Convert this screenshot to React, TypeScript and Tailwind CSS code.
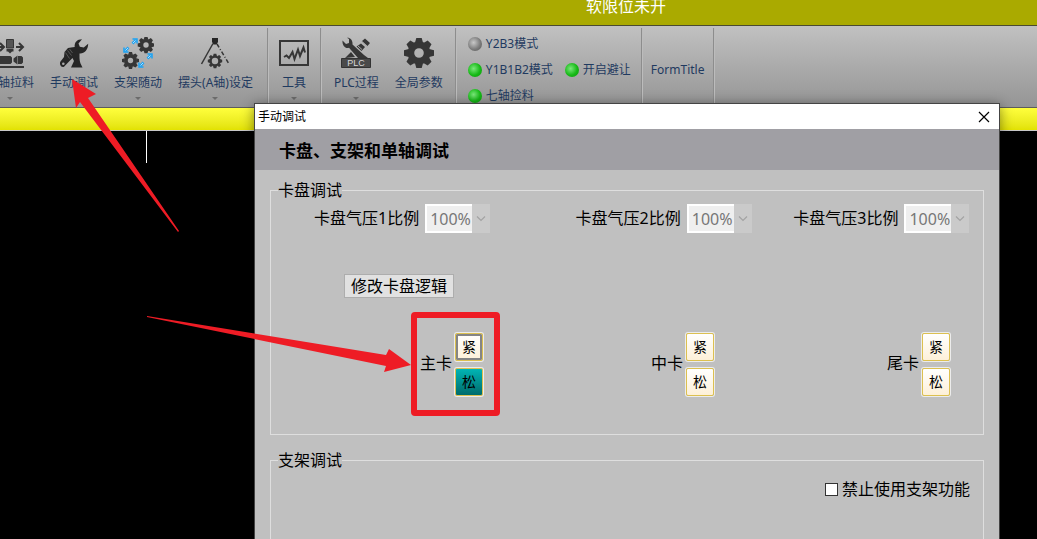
import type { ReactNode } from 'react';

const Gear = ({ cx, cy, r, hole, teeth = 8 }: { cx: number; cy: number; r: number; hole: number; teeth?: number }) => {
  const body = r * 0.76;
  const angles = Array.from({ length: teeth }, (_, i) => (i * 360) / teeth);
  return (
    <g transform={`translate(${cx} ${cy})`}>
      <circle r={(body + hole) / 2} fill="none" stroke="currentColor" strokeWidth={body - hole} />
      {angles.map((a) => (
        <path
          key={a}
          transform={`rotate(${a})`}
          fill="currentColor"
          d={`M${-r * 0.27} ${-body * 0.9} L${-r * 0.18} ${-r} H${r * 0.18} L${r * 0.27} ${-body * 0.9}Z`}
        />
      ))}
    </g>
  );
};

const Icon = ({ children }: { children: ReactNode }) => (
  <svg className="w-8 h-8 shrink-0 text-[#363636]" viewBox="0 0 32 32" fill="none" aria-hidden="true">
    {children}
  </svg>
);

const FeedIcon = () => (
  <Icon>
    <path d="M12.5 2.5h7v8.5h-7z" fill="#555" stroke="currentColor" />
    <path d="M12.5 12h7v2.5h-1.5l-2 2-2-2h-1.5z" fill="currentColor" />
    <path d="M22 10h6M25 6l4 4-4 4M3 10h6M6 6l4 4-4 4" stroke="currentColor" strokeWidth="2" />
    <path d="M5 19h11.500l1.500 1.500v5l-1.500 1.500H5zM19.500 21.500l4-3v9l-4-3zM24 19h3.500l1.500 1.500v5L27.500 27H24z" fill="currentColor" />
    <path d="M0 30h30" stroke="currentColor" strokeWidth="2" />
  </Icon>
);

const HandWrenchIcon = () => (
  <Icon>
    <path
      d="M24 2.200C19 2.200 16.200 5.500 16.700 10L13 10.500 10 11 6.500 15 6 20 2.500 24.500C1 27 3 31 6 29.800L11.500 24 14.500 21 16 24 13 30.500H24.500C23 27.500 21.500 25 21.500 21V16.500C26 17 30 13.500 30.200 6.800L25.800 10.500 21.800 9.800 20.500 6.500Z"
      fill="#262626"
    />
    <path d="M7.500 15.500l4 6M9.500 13.500l4 5M11.500 12l3 4" stroke="#777" strokeWidth=".6" />
    <circle cx="5.300" cy="26.800" r="1.300" fill="#aaa" />
  </Icon>
);

const FollowIcon = () => (
  <Icon>
    <Gear cx={24} cy={8} r={8.3} hole={2.7} />
    <Gear cx={8.5} cy={23.5} r={8.5} hole={2.7} />
    <g stroke="#1aa3f5" strokeWidth="2.500">
      <path d="M3 14l3.500-3.500M10.500 6.500L14 3M18 29l3.500-3.500M25.500 21.500L29 18" />
      <path d="M2 10.500v4.500h4.500M10.500 2H15v4.500M17 25.500v4.500h4.500M25.500 17H30v4.500" strokeWidth="1.500" />
    </g>
    <path d="M3.500 13.500l2.500-2.500M11 6l2.500-2.500M18.500 28.500L21 26M26 21l2.500-2.500" stroke="#d7efff" strokeWidth=".8" />
  </Icon>
);

const SwingIcon = () => (
  <Icon>
    <path d="M13 1h6v4l-1.500 2.500h-3L13 5z" fill="#262626" />
    <path d="M14 6.500L2.500 27" stroke="currentColor" strokeWidth="1.500" />
    <path d="M18 7l12 20" stroke="currentColor" strokeWidth="1.500" strokeDasharray="4 2 1 2" />
    <Gear cx={16} cy={24} r={7.2} hole={3.2} />
  </Icon>
);

const ToolsIcon = () => (
  <Icon>
    <path d="M2 4h28v24H2z" stroke="currentColor" strokeWidth="2" />
    <path d="M6 20l2.500-1.500L11 21l3.500-6 2 7L20 12.500l2 6.500 3.500-8.500 1.500 5" stroke="currentColor" strokeWidth="2" />
  </Icon>
);

const PlcIcon = () => (
  <Icon>
    <path d="M2.500 3.500l3.500 3.500 3-1V2L7 .800C10 .500 13 3 12.500 7.500L24 18l4 3H18L9 10.800C5.500 12 2 8.500 2.500 3.500Z" fill="currentColor" />
    <path d="M22 4l3-2.500L30 6l-2.500 3zM16.500 9.500L21 6.500l4 3.500-3.500 4zM5 21l6-6 4 5z" fill="currentColor" />
    <path d="M21.500 4.500l6 5.500M18 9l4 3.500" stroke="#a8a8a8" strokeWidth="1" />
    <path d="M1.500 21.500h29v9h-29z" fill="#4a4a4a" stroke="#333" />
    <text x="16" y="29" textAnchor="middle" fill="#d8d8d8" fontSize="9" fontFamily="Liberation Sans, sans-serif">PLC</text>
  </Icon>
);

const SettingsIcon = () => (
  <Icon>
    <Gear cx={16} cy={16} r={15} hole={4.8} />
  </Icon>
);

type RibbonButtonProps = { icon: ReactNode; label: string; menu?: boolean; labelClass?: string };

const RibbonButton = ({ icon, label, menu = true, labelClass = '' }: RibbonButtonProps) => (
  <button className="flex flex-col items-center px-2 pt-[11px] shrink-0">
    {icon}
    <span className={`mt-1 text-xs leading-5 whitespace-nowrap ${labelClass}`}>{label}</span>
    {menu && <span className="mt-1 border-x-[3px] border-x-transparent border-t-[3px] border-t-[#6b6b6b]" />}
  </button>
);

const Separator = () => (
  <div className="w-[2px] shrink-0 mt-[2px] bg-[#8d8d8d] border-r border-[#bcbcbc]" />
);

const ModeButton = ({ label, on = true }: { label: string; on?: boolean }) => (
  <button className="flex items-center gap-1 h-[26px] text-xs whitespace-nowrap">
    <span
      className={`w-[14px] h-[14px] rounded-full ${
        on
          ? 'bg-[radial-gradient(circle_at_40%_40%,#7be87b,#16b916_55%,#0a9a0a)]'
          : 'bg-[radial-gradient(circle_at_40%_40%,#c8c8c8,#7d7d7d_55%,#505050)]'
      }`}
    />
    {label}
  </button>
);

const PressureSelect = ({ id, label }: { id: string; label: string }) => (
  <div className="flex items-center gap-[6px]">
    <label htmlFor={id} className="pb-[2px] whitespace-nowrap">{label}</label>
    <div className="flex items-center w-[65px] h-[29px] bg-[#cacaca] shrink-0">
      <select
        id={id}
        disabled
        className="appearance-none w-[47px] h-[29px] pl-[3px] border-2 border-r-0 border-white bg-[#efefef] text-[#777] opacity-100"
      >
        <option>100%</option>
      </select>
      <svg className="w-[18px] h-[9px]" viewBox="0 0 18 9" fill="none" aria-hidden="true">
        <path d="M5 2.500l4 4 4-4" stroke="#a3a3a3" strokeWidth="1.200" />
      </svg>
    </div>
  </div>
);

const clampStyles = {
  normal: 'bg-linear-to-b from-white to-[#fdf0d8]',
  focused: 'bg-linear-to-b from-white to-[#fdf0d8] inset-ring-2 inset-ring-[#858585]',
  active: 'bg-linear-to-b from-[#00b5b5] to-[#006c6c]',
};

type ClampState = keyof typeof clampStyles;

const ClampButton = ({ label, state = 'normal' }: { label: string; state?: ClampState }) => (
  <button
    className={`w-7 h-7 border border-[#dcc050] rounded-xs ring-1 ring-[#ececec] text-sm leading-none ${clampStyles[state]}`}
  >
    {label}
  </button>
);

const Clamp = ({ name, tight, loose }: { name: string; tight?: ClampState; loose?: ClampState }) => (
  <div className="flex items-center gap-[3px]">
    <span className="pb-1 whitespace-nowrap">{name}</span>
    <div className="flex flex-col gap-[7px]">
      <ClampButton label="紧" state={tight} />
      <ClampButton label="松" state={loose} />
    </div>
  </div>
);

const DebugDialog = () => (
  <section
    role="dialog"
    aria-label="手动调试"
    className="absolute left-[254px] right-[37px] top-[103px] bottom-0 flex flex-col overflow-hidden border border-b-0 border-[#444] bg-[#c0c0c0] text-base text-black shadow-[0_2px_12px_rgba(0,0,0,0.45)]"
  >
    <div className="flex items-center justify-between h-[25px] shrink-0 bg-white pl-[3px] pr-[9px] text-xs">
      <span>手动调试</span>
      <button aria-label="关闭">
        <svg className="w-3 h-3" viewBox="0 0 12 12" fill="none">
          <path d="M1 1l10 10M11 1L1 11" stroke="#000" strokeWidth="1.200" />
        </svg>
      </button>
    </div>
    <h1 className="h-[41px] shrink-0 bg-[#a09fa4] pl-6 pt-[2px] text-[17px] leading-10 font-bold">卡盘、支架和单轴调试</h1>

    <div className="flex flex-col flex-1 gap-[14px] px-[15px] pt-[9px]">
      <fieldset className="h-[256px] shrink-0 border border-[#dedede]">
        <legend className="ml-[7px] leading-[22px]">卡盘调试</legend>
        <div className="grid grid-cols-[262fr_218fr_190fr] pl-[43px] pt-[3px]">
          <PressureSelect id="pressure1" label="卡盘气压1比例" />
          <PressureSelect id="pressure2" label="卡盘气压2比例" />
          <PressureSelect id="pressure3" label="卡盘气压3比例" />
        </div>
        <button className="block ml-[73px] mt-[41px] h-6 px-[6px] border border-[#adadad] bg-[#e1e1e1] leading-[22px]">
          修改卡盘逻辑
        </button>
        <div className="grid grid-cols-[231fr_236fr_96fr] pl-[149px] mt-[35px]">
          <Clamp name="主卡" tight="focused" loose="active" />
          <Clamp name="中卡" />
          <Clamp name="尾卡" />
        </div>
      </fieldset>

      <fieldset className="flex-1 border border-b-0 border-[#dedede]">
        <legend className="ml-[7px] leading-[22px]">支架调试</legend>
        <div className="flex justify-end pr-[13px] pt-[6px]">
          <label className="flex items-center gap-1 leading-6">
            <input type="checkbox" className="appearance-none w-[13px] h-[13px] border border-[#333] bg-white" />
            禁止使用支架功能
          </label>
        </div>
      </fieldset>
    </div>
  </section>
);

const Annotations = () => (
  <svg className="absolute left-0 top-0 w-[1037px] h-[539px] pointer-events-none" viewBox="0 0 1037 539" aria-hidden="true">
    <g fill="#ee1c25">
      <path d="M72 79l24 15-8 4L179 231l-1 1L80 102l-4 6z" />
      <path d="M147 316l239 39 3-6 22 16-27 7 2-6-239-49z" />
    </g>
    <rect x="414" y="315" width="83" height="98" rx="1" fill="none" stroke="#ee1c25" strokeWidth="6" strokeLinejoin="round" />
  </svg>
);

const App = () => {
  return (
    <div className="relative min-h-screen overflow-hidden bg-black font-['Noto_Sans','Noto_Sans_CJK_SC',sans-serif]">
      <header className="flex justify-center h-[26px] pl-[215px] bg-[#aaaa00] border-b border-[#4a4a30] text-base leading-3 text-white">
        软限位未开
      </header>

      <nav className="flex h-[81px] overflow-hidden bg-linear-to-b from-[#c1c1c1] to-[#959595] text-[#1f3a60]">
        <div className="flex -ml-[22px] pr-[6px]">
          <RibbonButton icon={<FeedIcon />} label="轴拉料" labelClass="pl-3" />
          <RibbonButton icon={<HandWrenchIcon />} label="手动调试" menu={false} />
          <RibbonButton icon={<FollowIcon />} label="支架随动" />
          <RibbonButton icon={<SwingIcon />} label="摆头(A轴)设定" />
        </div>
        <Separator />
        <div className="flex pl-[1px] pr-[2px]">
          <RibbonButton icon={<ToolsIcon />} label="工具" />
        </div>
        <Separator />
        <div className="flex px-[4px]">
          <RibbonButton icon={<PlcIcon />} label="PLC过程" />
          <RibbonButton icon={<SettingsIcon />} label="全局参数" menu={false} />
        </div>
        <Separator />
        <div className="flex gap-[12px] pl-[11px] pr-[10px] pt-[5px]">
          <div>
            <ModeButton label="Y2B3模式" on={false} />
            <ModeButton label="Y1B1B2模式" />
            <ModeButton label="七轴捡料" />
          </div>
          <div className="pt-[26px]">
            <ModeButton label="开启避让" />
          </div>
        </div>
        <Separator />
        <div className="px-2 pt-[31px] text-xs leading-[26px]">FormTitle</div>
        <Separator />
      </nav>

      <div className="h-6 border-y border-t-[#5c5c5c] border-b-[#c8c8c8] bg-linear-to-b from-[#ffff3c] to-[#e2e200]" />
      <div className="ml-[146px] w-px h-8 bg-white" />

      <DebugDialog />
      <Annotations />
    </div>
  );
};

export default App;
